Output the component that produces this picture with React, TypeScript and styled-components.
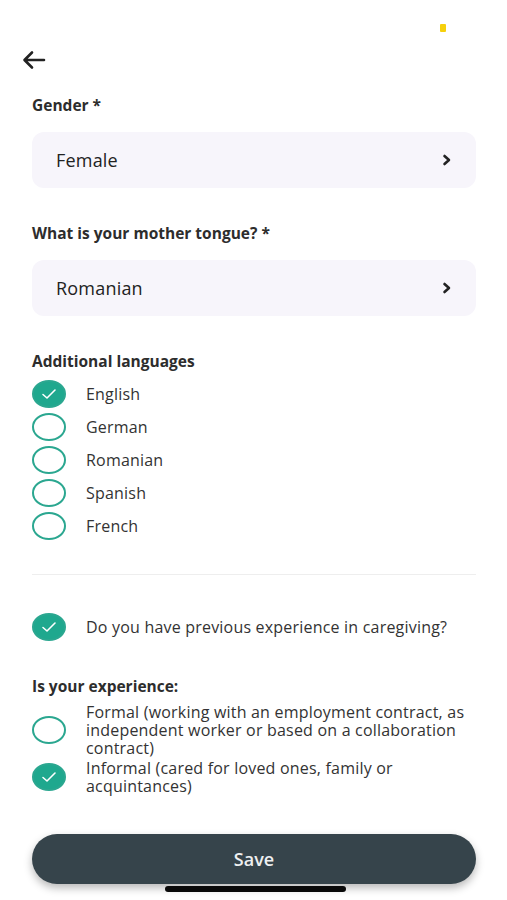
import React from "react";
import styled, { createGlobalStyle } from "styled-components";

const Global = createGlobalStyle`
  html, body { margin: 0; padding: 0; background: #ffffff; }
  body { font-family: "Open Sans", "Noto Sans", sans-serif; color: #222; }
  * { box-sizing: border-box; }
`;

const Screen = styled.div`
  width: 507px;
  min-height: 900px;
  display: flex;
  flex-direction: column;
  background: #fff;
`;

const StatusBar = styled.div`
  height: 40px;
  display: flex;
  justify-content: flex-end;
  align-items: flex-start;
  padding: 24px 61px 0 0;
`;

const StatusDot = styled.div`
  width: 6px;
  height: 8px;
  border-radius: 1px;
  background: #f6d00c;
`;

const NavBar = styled.div`
  height: 40px;
  display: flex;
  align-items: center;
  padding-left: 21px;
`;

const BackButton = styled.button`
  border: 0;
  background: none;
  padding: 0;
  width: 26px;
  height: 26px;
  display: flex;
  align-items: center;
  justify-content: center;
  cursor: pointer;
`;

const Content = styled.div`
  display: flex;
  flex-direction: column;
  padding: 0 31px 0 32px;
`;

const Label = styled.div<{ $top: number }>`
  margin-top: ${(p) => p.$top}px;
  font-size: 15.5px;
  line-height: 20px;
  font-weight: 700;
  color: #2d2d2d;
`;

const Field = styled.div`
  margin-top: 17px;
  height: 56px;
  border-radius: 12px;
  background: #f7f5fb;
  display: flex;
  align-items: center;
  justify-content: space-between;
  padding: 0 24px 0 24px;
  font-size: 18px;
  letter-spacing: 0.2px;
  color: #222;
`;

const CheckList = styled.div<{ $top: number }>`
  margin-top: ${(p) => p.$top}px;
  display: flex;
  flex-direction: column;
`;

const CheckRow = styled.div`
  display: flex;
  align-items: center;
  min-height: 33px;
  gap: 20px;
`;

const Circle = styled.div<{ $on: boolean }>`
  flex: none;
  width: 34px;
  height: 28px;
  border-radius: 50%;
  border: 2px solid #2ba790;
  background: ${(p) => (p.$on ? "#1fa88e" : "#fff")};
  display: flex;
  align-items: center;
  justify-content: center;
`;

const CheckText = styled.div`
  font-size: 16px;
  line-height: 18px;
  letter-spacing: 0.2px;
  color: #333;
`;

const Divider = styled.div`
  margin-top: 32px;
  height: 1px;
  background: #eeeeee;
`;

const ExperienceList = styled.div`
  margin-top: 7px;
  display: flex;
  flex-direction: column;
  gap: 2px;
`;

const SaveButton = styled.button`
  margin-top: 39px;
  height: 50px;
  border: 0;
  border-radius: 25px;
  background: #36444b;
  color: #eef0f1;
  font-family: "Open Sans", sans-serif;
  font-size: 18px;
  font-weight: 600;
  box-shadow: 0 4px 8px rgba(0, 0, 0, 0.28);
  cursor: pointer;
`;

const HomeIndicator = styled.div`
  margin: 2px auto 0;
  width: 181px;
  height: 6px;
  border-radius: 3px;
  background: #0a0a0a;
  position: relative;
  left: 1px;
`;

const Check = () => (
  <svg width="16" height="12" viewBox="0 0 16 12" fill="none">
    <path d="M2 6.5 L6 10 L14 2" stroke="#fff" strokeWidth="1.6" strokeLinecap="round" strokeLinejoin="round" />
  </svg>
);

const Chevron = () => (
  <svg width="10" height="12" viewBox="0 0 10 12" fill="none">
    <path d="M2.5 2 L7 6 L2.5 10" stroke="#222" strokeWidth="2.6" strokeLinecap="round" strokeLinejoin="round" />
  </svg>
);

const BackArrow = () => (
  <svg width="24" height="20" viewBox="0 0 24 20" fill="none">
    <path d="M22 10 H3 M10 2.5 L2.5 10 L10 17.5" stroke="#222" strokeWidth="2.6" strokeLinecap="round" strokeLinejoin="round" />
  </svg>
);

const Checkbox = ({ on, children }: { on: boolean; children: React.ReactNode }) => (
  <CheckRow>
    <Circle $on={on}>{on && <Check />}</Circle>
    <CheckText>{children}</CheckText>
  </CheckRow>
);

const languages = [
  { name: "English", on: true },
  { name: "German", on: false },
  { name: "Romanian", on: false },
  { name: "Spanish", on: false },
  { name: "French", on: false },
];

export default function App() {
  return (
    <Screen>
      <Global />
      <StatusBar>
        <StatusDot />
      </StatusBar>
      <NavBar>
        <BackButton aria-label="Back">
          <BackArrow />
        </BackButton>
      </NavBar>
      <Content>
        <Label $top={15}>Gender *</Label>
        <Field>
          <span>Female</span>
          <Chevron />
        </Field>
        <Label $top={35}>What is your mother tongue? *</Label>
        <Field>
          <span>Romanian</span>
          <Chevron />
        </Field>
        <Label $top={35}>Additional languages</Label>
        <CheckList $top={6}>
          {languages.map((l) => (
            <Checkbox key={l.name} on={l.on}>
              {l.name}
            </Checkbox>
          ))}
        </CheckList>
        <Divider />
        <CheckList $top={35}>
          <Checkbox on={true}>Do you have previous experience in caregiving?</Checkbox>
        </CheckList>
        <Label $top={33}>Is your experience:</Label>
        <ExperienceList>
          <Checkbox on={false}>
            Formal (working with an employment contract, as independent worker or based on a collaboration contract)
          </Checkbox>
          <Checkbox on={true}>Informal (cared for loved ones, family or acquintances)</Checkbox>
        </ExperienceList>
        <SaveButton>Save</SaveButton>
        <HomeIndicator />
      </Content>
    </Screen>
  );
}
